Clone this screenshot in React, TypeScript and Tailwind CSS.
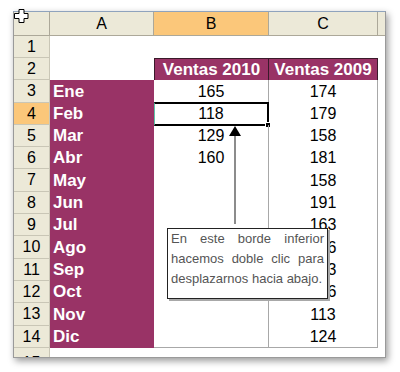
import React from 'react';

type Row = { n: number; h: string; a?: string; b?: string; c?: string; head?: boolean };

const rows: Row[] = [
  { n: 1, h: 'h-[22px]' },
  { n: 2, h: 'h-[22px]', head: true },
  { n: 3, h: 'h-[23px]', a: 'Ene', b: '165', c: '174' },
  { n: 4, h: 'h-[22px]', a: 'Feb', b: '118', c: '179' },
  { n: 5, h: 'h-[22px]', a: 'Mar', b: '129', c: '158' },
  { n: 6, h: 'h-[22px]', a: 'Abr', b: '160', c: '181' },
  { n: 7, h: 'h-[23px]', a: 'May', c: '158' },
  { n: 8, h: 'h-[22px]', a: 'Jun', c: '191' },
  { n: 9, h: 'h-[22px]', a: 'Jul', c: '163' },
  { n: 10, h: 'h-[23px]', a: 'Ago', c: '146' },
  { n: 11, h: 'h-[22px]', a: 'Sep', c: '133' },
  { n: 12, h: 'h-[22px]', a: 'Oct', c: '176' },
  { n: 13, h: 'h-[23px]', a: 'Nov', c: '113' },
  { n: 14, h: 'h-[22px]', a: 'Dic', c: '124' },
];

const hdr = 'flex items-center justify-center bg-[#ECE9D8] text-[16px] text-black';

export default function App() {
  return (
    <div className="relative w-[400px] h-[372px] bg-white overflow-hidden" style={{ fontFamily: '"Liberation Sans", Arial, sans-serif' }}>
      <div className="ml-[13px] mt-[11px] w-[373px] h-[347px] border border-[#9a9a9a] border-t-[#8fa3bd] bg-white shadow-[2px_3px_7px_rgba(0,0,0,0.4)] overflow-hidden">
        {/* column headers */}
        <div className="flex h-[24px]">
          <div className={hdr + ' w-[36px] border-r border-b border-[#aca899]'} />
          <div className={hdr + ' w-[104px] border-r border-b border-[#aca899]'}>A</div>
          <div className={hdr + ' w-[115px] border-r border-b border-[#aca899] bg-[#FBC77A]'}>B</div>
          <div className={hdr + ' w-[109px] border-r border-b border-[#aca899]'}>C</div>
          <div className={hdr + ' flex-1 border-b border-[#aca899]'} />
        </div>
        {rows.map((r) => (
          <div key={r.n} className={'flex ' + r.h}>
            <div className={hdr + ' w-[36px] border-r border-b border-[#c9c6b6] ' + (r.n === 4 ? 'bg-[#FBC77A]' : '')}>{r.n}</div>
            {r.a ? (
              <div className="w-[104px] flex items-center pl-[3px] bg-[#993366] text-white font-bold text-[17px]">{r.a}</div>
            ) : (
              <div className="w-[104px] bg-white" />
            )}
            {r.head ? (
              <>
                <div className="w-[115px] flex items-center justify-center bg-[#993366] text-white font-bold text-[17px] border-t border-l border-r border-[#3a1a2a]">Ventas 2010</div>
                <div className="w-[109px] flex items-center justify-center bg-[#993366] text-white font-bold text-[17px] border-t border-r border-[#3a1a2a]">Ventas 2009</div>
              </>
            ) : r.n === 1 ? (
              <>
                <div className="w-[115px]" />
                <div className="w-[109px]" />
              </>
            ) : (
              <>
                <div className={'relative w-[115px] flex items-center justify-center text-[16px] text-black border-r border-[#a8a8a8] ' + (r.n === 14 ? 'border-b' : '')}>
                  {r.b}
                  {r.n === 4 && (
                    <div className="absolute left-0 top-[-1px] right-[-1px] bottom-[-1px] border-t-2 border-b-2 border-r-2 border-l border-black border-l-[#5fc4a8]">
                      <div className="absolute right-[-4px] bottom-[-4px] w-[6px] h-[6px] bg-black border border-white" />
                    </div>
                  )}
                </div>
                <div className={'w-[109px] flex items-center justify-center text-[16px] text-black border-r border-[#a8a8a8] ' + (r.n === 14 ? 'border-b' : '')}>{r.c}</div>
              </>
            )}
            <div className="flex-1 bg-white" />
          </div>
        ))}
        <div className="flex h-[20px]">
          <div className={hdr + ' w-[36px] border-r border-[#c9c6b6] items-start pt-[3px]'}>15</div>
          <div className="flex-1 bg-white" />
        </div>
      </div>

      {/* cursor */}
      <svg className="absolute left-[14px] top-[9px]" width="15" height="14" viewBox="0 0 15 14">
        <path d="M5 0.5h5v4h4v5h-4v4h-5v-4h-4.5v-5h4.5z" fill="#fff" stroke="#000" strokeWidth="1" />
      </svg>

      {/* arrow */}
      <div className="absolute left-[234px] top-[133px] w-[2px] h-[91px] bg-[#8c8c8c]" />
      <svg className="absolute left-[229px] top-[126px]" width="12" height="10" viewBox="0 0 12 10">
        <polygon points="6,0 12,10 0,10" fill="#000" />
      </svg>

      {/* callout */}
      <div className="absolute left-[167px] top-[228px] w-[161px] h-[71px] border border-[#222] bg-white shadow-[2px_2px_0_#a8a8a8] px-[3px] text-[13px] leading-[20px] text-[#555] text-justify">
        En este borde inferior hacemos doble clic para desplazarnos hacia abajo.
      </div>
    </div>
  );
}
